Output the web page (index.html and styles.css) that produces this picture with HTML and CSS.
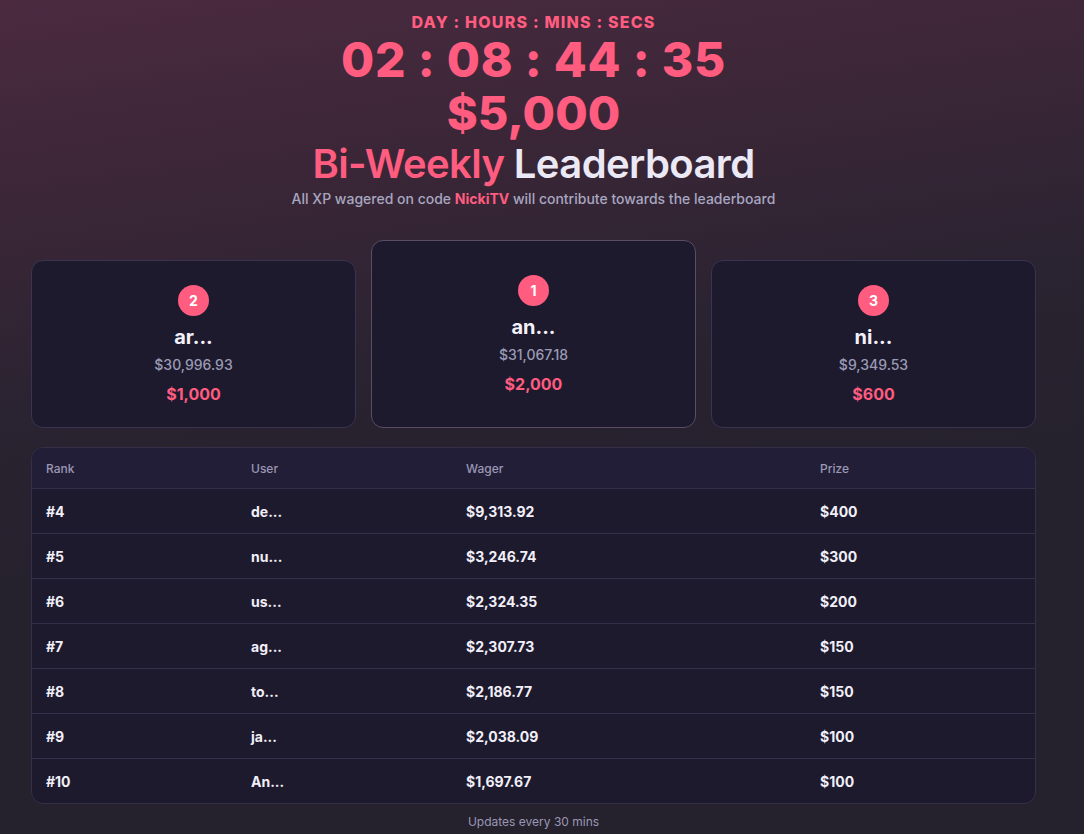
FILE: index.html
```html
<!DOCTYPE html>
<html lang="en">
<head>
<meta charset="utf-8">
<title>Bi-Weekly Leaderboard</title>
<link rel="stylesheet" href="styles.css">
</head>
<body>
<main class="page">
  <header class="hero">
    <div class="timer-label">DAY : HOURS : MINS : SECS</div>
    <div class="timer">02 : 08 : 44 : 35</div>
    <div class="pool">$5,000</div>
    <h1 class="title"><span class="pink">Bi-Weekly</span> Leaderboard</h1>
    <p class="subtitle">All XP wagered on code <span class="code">NickiTV</span> will contribute towards the leaderboard</p>
  </header>

  <section class="podium">
    <div class="card">
      <div class="badge">2</div>
      <div class="name">ar...</div>
      <div class="wager">$30,996.93</div>
      <div class="prize">$1,000</div>
    </div>
    <div class="card card-first">
      <div class="badge">1</div>
      <div class="name">an...</div>
      <div class="wager">$31,067.18</div>
      <div class="prize">$2,000</div>
    </div>
    <div class="card">
      <div class="badge">3</div>
      <div class="name">ni...</div>
      <div class="wager">$9,349.53</div>
      <div class="prize">$600</div>
    </div>
  </section>

  <section class="table">
    <div class="row head"><span>Rank</span><span>User</span><span>Wager</span><span>Prize</span></div>
    <div class="row"><span>#4</span><span>de...</span><span>$9,313.92</span><span>$400</span></div>
    <div class="row"><span>#5</span><span>nu...</span><span>$3,246.74</span><span>$300</span></div>
    <div class="row"><span>#6</span><span>us...</span><span>$2,324.35</span><span>$200</span></div>
    <div class="row"><span>#7</span><span>ag...</span><span>$2,307.73</span><span>$150</span></div>
    <div class="row"><span>#8</span><span>to...</span><span>$2,186.77</span><span>$150</span></div>
    <div class="row"><span>#9</span><span>ja...</span><span>$2,038.09</span><span>$100</span></div>
    <div class="row"><span>#10</span><span>An...</span><span>$1,697.67</span><span>$100</span></div>
  </section>

  <footer class="footer">Updates every 30 mins</footer>
</main>
</body>
</html>
```

FILE: styles.css
```css
* { box-sizing: border-box; }
html, body { margin: 0; padding: 0; }
body {
  min-height: 834px;
  font-family: Inter, "Noto Sans", "Liberation Sans", sans-serif;
  color: #f1eff8;
  background-color: #25212d;
  background-image: linear-gradient(172deg, #4b2a40 0%, #3a2637 22%, #2a2331 42%, #25212d 60%, #25212d 100%);
}
.page {
  padding: 11px 48px 0 31px;
}
.hero {
  display: flex;
  flex-direction: column;
  align-items: center;
  text-align: center;
}
.timer-label {
  font-size: 16px;
  font-weight: 800;
  letter-spacing: 1.2px;
  color: #ff5c80;
  line-height: 22px;
}
.timer {
  font-size: 48px;
  font-weight: 800;
  letter-spacing: 0.8px;
  color: #ff5c80;
  line-height: 48px;
  margin-top: 3px;
}
.pool {
  font-size: 47px;
  font-weight: 800;
  letter-spacing: 0;
  color: #ff5c80;
  line-height: 56px;
  margin-top: 1px;
}
.title {
  margin: 0;
  font-size: 40px;
  font-weight: 600;
  letter-spacing: -0.6px;
  line-height: 46px;
  color: #ece9f6;
}
.pink { color: #ff5c80; }
.subtitle {
  margin: 3px 0 0;
  font-size: 14px;
  font-weight: 500;
  color: #a8a7c0;
  line-height: 18px;
}
.code { color: #ff5c80; font-weight: 700; }

.podium {
  display: flex;
  align-items: flex-end;
  gap: 15px;
  margin-top: 32px;
}
.card {
  flex: 1;
  height: 168px;
  background: #1e1a2e;
  border: 1px solid #3a3450;
  border-radius: 12px;
  display: flex;
  flex-direction: column;
  align-items: center;
  justify-content: center;
}
.card-first {
  height: 188px;
  border-color: #5a4b66;
}
.badge {
  width: 31px;
  height: 31px;
  border-radius: 50%;
  background: #ff5c80;
  color: #fff;
  font-size: 14px;
  font-weight: 700;
  display: flex;
  align-items: center;
  justify-content: center;
}
.name {
  margin-top: 8px;
  font-size: 20px;
  font-weight: 700;
  line-height: 26px;
  color: #f3f1fa;
}
.wager {
  margin-top: 6px;
  font-size: 14px;
  font-weight: 500;
  color: #9a9ab5;
  line-height: 18px;
}
.prize {
  margin-top: 10px;
  font-size: 16px;
  font-weight: 700;
  color: #ff5c80;
  line-height: 20px;
}

.table {
  margin-top: 19px;
  border: 1px solid #353049;
  border-radius: 12px;
  overflow: hidden;
  background: #1d1a2d;
}
.row {
  display: grid;
  grid-template-columns: 205px 215px 354px 1fr;
  padding-left: 14px;
  height: 45px;
  align-items: center;
  font-size: 14px;
  font-weight: 700;
  color: #f1eff8;
  border-top: 1px solid #34304a;
}
.row.head {
  height: 40px;
  border-top: none;
  background: #231e37;
  font-size: 12px;
  font-weight: 500;
  color: #9a98b5;
}
.footer {
  text-align: center;
  font-size: 12px;
  color: #9a98b5;
  padding: 10px 0 6px;
}
```
